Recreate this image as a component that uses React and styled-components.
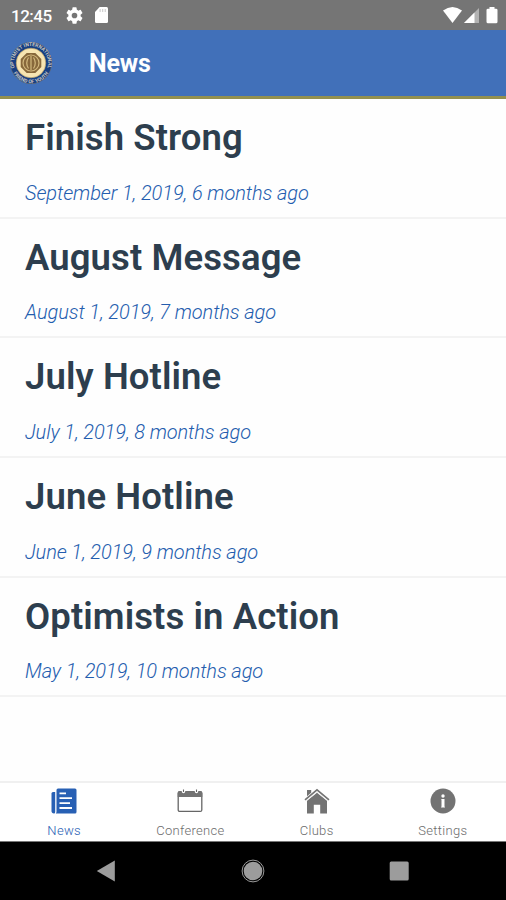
import React from 'react';
import styled, { createGlobalStyle } from 'styled-components';

const GlobalStyle = createGlobalStyle`
  * { box-sizing: border-box; }
  body { margin: 0; background: #fff; font-family: Roboto, sans-serif; }
  svg { display: block; flex: none; }
`;

const Screen = styled.div`
  display: flex;
  flex-direction: column;
  width: 506px;
  height: 900px;
  overflow: hidden;
  background: #fefefe;
`;

const StatusBar = styled.div`
  display: flex;
  flex: none;
  align-items: center;
  justify-content: space-between;
  height: 30px;
  padding: 0 7px 0 11px;
  background: #757575;
`;

const StatusGroup = styled.div`
  display: flex;
  align-items: center;
`;

const Clock = styled.span`
  width: 55px;
  font-size: 17px;
  font-weight: 500;
  line-height: 20px;
  letter-spacing: -0.5px;
  padding-top: 1px;
  color: #fff;
`;

const AppBar = styled.header`
  display: flex;
  flex: none;
  align-items: center;
  gap: 36px;
  height: 69px;
  padding: 0 9px;
  background: #4170b9;
  border-bottom: 3px solid #93904f;
`;

const AppTitle = styled.h1`
  margin: 0;
  padding-top: 2px;
  font-size: 25px;
  font-weight: 700;
  line-height: 30px;
  letter-spacing: -0.2px;
  color: #fff;
`;

const NewsList = styled.main`
  flex: 1;
`;

const NewsItem = styled.article`
  height: 119.7px;
  padding: 18px 25px 0;
  border-bottom: 2px solid #f3f3f3;
`;

const Headline = styled.h2`
  margin: 0;
  font-size: 36.5px;
  font-weight: 600;
  line-height: 42px;
  letter-spacing: 0.1px;
  color: #2d3e4e;
`;

const Posted = styled.p`
  margin: 21.6px 0 0;
  font-size: 20px;
  font-style: italic;
  font-weight: 300;
  line-height: 24px;
  letter-spacing: -0.1px;
  color: #245dae;
`;

const TabBar = styled.nav`
  display: grid;
  flex: none;
  grid-template-columns: repeat(4, 1fr);
  height: 61px;
  padding-left: 1px;
  border-top: 2px solid #f0f0f0;
  border-bottom: 1px solid #777;
  background: #fff;
`;

const Tab = styled.div`
  display: flex;
  flex-direction: column;
  align-items: center;
  gap: 9px;
  padding-top: 5px;
  font-size: 13px;
  line-height: 16px;
  letter-spacing: 0.3px;
  color: ${(p) => (p.$active ? '#2860b4' : '#6c6c6c')};
`;

const TabLabel = styled.span`
  font-weight: 300;
`;

const SystemNav = styled.div`
  display: flex;
  flex: none;
  align-items: center;
  justify-content: space-between;
  height: 58px;
  padding: 0 96px;
  background: #000;
`;

const CogIcon = styled.svg`
  margin-right: 12px;
`;

function SettingsCog() {
  return (
    <CogIcon width="17" height="17" viewBox="2 2 20 20" fill="#fff">
      <path d="M19.14 12.94a7 7 0 0 0 0-1.88l2.03-1.58a.5.5 0 0 0 .12-.61l-1.92-3.32a.49.49 0 0 0-.59-.22l-2.39.96a7 7 0 0 0-1.62-.94l-.36-2.54a.48.48 0 0 0-.48-.41h-3.84a.47.47 0 0 0-.47.41l-.36 2.54a7.400 7.400 0 0 0-1.620.94l-2.390-.96a.48.48 0 0 0-.59.22L2.740 8.870a.47.47 0 0 0 .12.61l2.030 1.580a7 7 0 0 0 0 1.880l-2.030 1.580a.5.5 0 0 0-.12.61l1.920 3.320c.12.22.37.29.59.22l2.390-.96c.5.38 1.030.7 1.620.94l.36 2.540c.05.24.24.41.48.41h3.840c.24 0 .44-.17.47-.41l.36-2.540a7.400 7.400 0 0 0 1.620-.94l2.390.96c.22.08.47 0 .59-.22l1.920-3.320a.47.47 0 0 0-.12-.61zM12 15.300a3.300 3.300 0 1 1 0-6.600 3.300 3.300 0 0 1 0 6.600z" />
    </CogIcon>
  );
}

function MemoryCard() {
  return (
    <svg width="13" height="16" viewBox="0 0 14 16" preserveAspectRatio="none">
      <path d="M5 0h7.500Q14 0 14 1.500v13Q14 16 12.500 16h-11Q0 16 0 14.500V5z" fill="#fff" />
      <path d="M5.500 2v3M8.300 2v3M11 2v3" stroke="#c8c8c8" strokeWidth="1.100" />
    </svg>
  );
}

function Signals() {
  return (
    <svg width="56" height="18" viewBox="0 0 56 18">
      <path d="M0 4.500Q9.500-2.500 19 4.500L9.500 17z" fill="#fff" />
      <path d="M36 2v15H21z" fill="#b2b2b2" />
      <path d="M31.500 6.500V17H21z" fill="#fff" />
      <path d="M46.500 1h5v1.800H53q1.500 0 1.500 1.300v11.600q0 1.600-1.500 1.600h-8q-1.500 0-1.500-1.600V4.100q0-1.300 1.500-1.300h1.500z" fill="#fff" />
    </svg>
  );
}

const SealText = styled.text`
  font-family: Roboto, sans-serif;
  font-size: 5px;
  font-weight: 700;
  fill: #c9c8c2;
`;

function Seal() {
  return (
    <svg width="44" height="44" viewBox="0 0 44 44">
      <defs>
        <path id="sealTop" d="M5.600 27A17.100 17.100 0 1 1 38.400 27" />
        <path id="sealBottom" d="M3 29A20.300 20.300 0 0 0 41 29" />
      </defs>
      <circle cx="22" cy="22" r="21" fill="#5c6472" />
      <circle cx="22" cy="22" r="20.300" fill="#173f83" />
      <SealText><textPath href="#sealTop" startOffset="50%" textAnchor="middle">OPTIMIST INTERNATIONAL</textPath></SealText>
      <SealText><textPath href="#sealBottom" startOffset="50%" textAnchor="middle">FRIEND OF YOUTH</textPath></SealText>
      <circle cx="22" cy="22" r="14.800" fill="#f7e5b2" stroke="#b49a61" strokeWidth=".6" />
      <path d="M17.700 12h8.600l6 6v8l-6 6h-8.600l-6-6v-8z" fill="#87683b" />
      <circle cx="22" cy="22" r="8" fill="none" stroke="#d3b97f" strokeWidth="1.200" />
      <path d="M19.500 16.500q-3.500 5.500 0 11M24.500 16.500q3.500 5.500 0 11M22 15v14" fill="none" stroke="#d3b97f" strokeWidth="1.200" />
    </svg>
  );
}

function NewsIcon() {
  return (
    <svg width="26" height="26" viewBox="0 0 26 26">
      <path d="M3.400 4H2Q.5 4 .5 5.500v17.300Q.5 25.500 3 25.500q1.200 0 1.200-1.500V4z" fill="#2860b4" />
      <path d="M5.500 2Q5.500.5 7 .5h17q1.500 0 1.500 1.500v22q0 1.500-1.500 1.500H4.800q.7-.7.700-2z" fill="#2860b4" />
      <path d="M8.500 5.300h6.500M8.500 10.200h12.500M8.500 15.100h10.500M8.500 20h12.500" stroke="#fff" strokeWidth="1.800" />
    </svg>
  );
}

function CalendarIcon() {
  return (
    <svg width="26" height="26" viewBox="0 0 26 26">
      <rect x="1.200" y="3.700" width="23.600" height="19.700" rx="1.500" fill="#fff" stroke="#666" strokeWidth="1.300" />
      <path d="M.7 9V5q0-1.800 1.800-1.800h21q1.800 0 1.800 1.800v4z" fill="#737373" />
      <circle cx="6.500" cy="3.500" r="1.700" fill="#fff" />
      <circle cx="19.500" cy="3.500" r="1.700" fill="#fff" />
      <path d="M6.500 1.500v2.600M19.500 1.500v2.600" stroke="#666" strokeWidth="1.100" />
    </svg>
  );
}

function HomeIcon() {
  return (
    <svg width="26" height="26" viewBox="0 0 26 26">
      <path d="M13 4.700 3 12.700v12.800h6.800v-8.800h6.400v8.800H23V12.700z" fill="#737373" />
      <path d="M3 2h4.200v2.700L3 8.200z" fill="#737373" />
      <path d="M1 11.800 13 1.900l12 9.900" fill="none" stroke="#737373" strokeWidth="1.700" />
      <path d="M2.300 12.800 13 4l10.700 8.800" fill="none" stroke="#eee" strokeWidth=".8" />
    </svg>
  );
}

function InfoIcon() {
  return (
    <svg width="26" height="26" viewBox="0 0 26 26">
      <circle cx="13" cy="13" r="12.500" fill="#737373" />
      <circle cx="13" cy="8" r="1.700" fill="#fff" />
      <path d="M11.200 10.900h3.300v7.900h.4v.6h-3.800v-.6h.4v-7.200h-.3z" fill="#fff" />
    </svg>
  );
}

const NEWS = [
  ['Finish Strong', 'September 1, 2019, 6 months ago'],
  ['August Message', 'August 1, 2019, 7 months ago'],
  ['July Hotline', 'July 1, 2019, 8 months ago'],
  ['June Hotline', 'June 1, 2019, 9 months ago'],
  ['Optimists in Action', 'May 1, 2019, 10 months ago'],
];

const TABS = [
  ['News', NewsIcon],
  ['Conference', CalendarIcon],
  ['Clubs', HomeIcon],
  ['Settings', InfoIcon],
];

export default function App() {
  return (
    <Screen>
      <GlobalStyle />
      <StatusBar>
        <StatusGroup>
          <Clock>12:45</Clock>
          <SettingsCog />
          <MemoryCard />
        </StatusGroup>
        <Signals />
      </StatusBar>
      <AppBar>
        <Seal />
        <AppTitle>News</AppTitle>
      </AppBar>
      <NewsList>
        {NEWS.map(([title, date]) => (
          <NewsItem key={title}>
            <Headline>{title}</Headline>
            <Posted>{date}</Posted>
          </NewsItem>
        ))}
      </NewsList>
      <TabBar>
        {TABS.map(([label, Icon], i) => (
          <Tab key={label} $active={i === 0}>
            <Icon />
            <TabLabel>{label}</TabLabel>
          </Tab>
        ))}
      </TabBar>
      <SystemNav>
        <svg width="20" height="22" viewBox="0 0 20 22"><path d="M.8 11 18.800.5v21z" fill="#9c9c9c" /></svg>
        <svg width="24" height="24" viewBox="0 0 24 24">
          <circle cx="12" cy="12" r="10.900" fill="none" stroke="#9c9c9c" strokeWidth="1" />
          <circle cx="12" cy="12" r="9.300" fill="#9c9c9c" />
        </svg>
        <svg width="21" height="20" viewBox="0 0 21 20"><rect x=".7" y=".5" width="19" height="19" rx="1.500" fill="#9c9c9c" /></svg>
      </SystemNav>
    </Screen>
  );
}
